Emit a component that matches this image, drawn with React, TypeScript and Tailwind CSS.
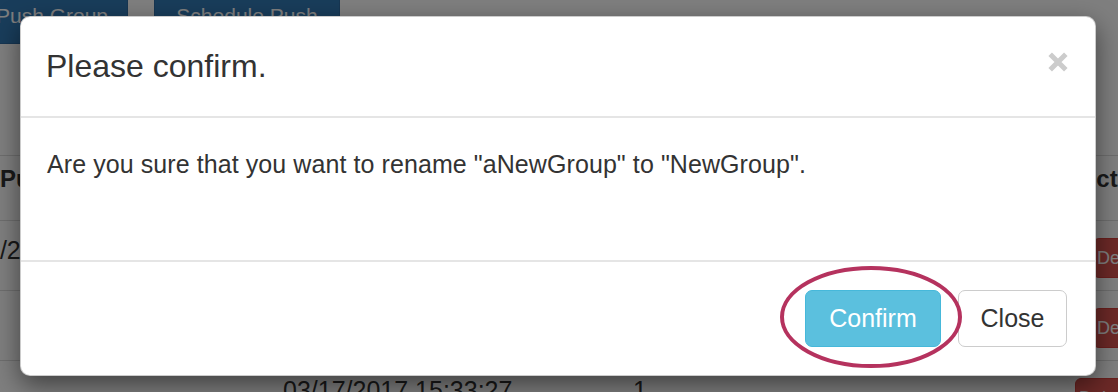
import React from 'react';

const rows = [
  { first: '3/20/2017 10:02:11', second: '03/20/2017 10:05:00', count: '2', actionPad: 'pl-[28px]' },
  { first: '', second: '03/18/2017 09:41:52', count: '1', actionPad: 'pl-[28px]' },
  { first: '', second: '03/17/2017 15:33:27', count: '1', actionPad: 'pl-[10px]' },
];

const App: React.FC = () => {
  return (
    <div className="relative w-[1118px] h-[392px] overflow-hidden bg-white font-['Liberation_Sans',Arial,sans-serif] text-[#333333]">
      {/* Page behind the dialog */}
      <div className="flex -mt-[13px] gap-[26px] -ml-[24px]">
        <button className="w-[152px] h-[57px] shrink-0 bg-[#337ab7] border border-[#2e6da4] rounded-[7px] text-white text-[21px]">Push Group</button>
        <button className="w-[186px] h-[57px] shrink-0 bg-[#337ab7] border border-[#2e6da4] rounded-[7px] text-white text-[21px]">Schedule Push</button>
      </div>

      <div className="mt-[111px] -ml-[14px] w-[1200px]">
        <div className="flex h-[65px] border-t border-[#dddddd] pt-[6px] text-[24px] leading-[34px] font-bold">
          <div className="w-[283px] shrink-0 pl-[14px] whitespace-nowrap">Pushed At</div>
          <div className="w-[350px] shrink-0 pl-[14px] whitespace-nowrap">Scheduled Time</div>
          <div className="w-[446px] shrink-0 pl-[14px]">Count</div>
          <div className="w-[121px] shrink-0 pl-[14px]">Actions</div>
        </div>
        {rows.map((r, i) => (
          <div key={i} className="flex h-[70px] border-t border-[#dddddd] text-[25px] leading-[36px]">
            <div className="w-[283px] shrink-0 pt-[11px] whitespace-nowrap">{r.first}</div>
            <div className="w-[350px] shrink-0 pl-[14px] pt-[11px] whitespace-nowrap">{r.second}</div>
            <div className="w-[446px] shrink-0 pl-[14px] pt-[11px]">{r.count}</div>
            <div className={`w-[121px] shrink-0 pt-[16px] whitespace-nowrap ${r.actionPad}`}>
              <button className="h-[40px] px-[3px] bg-[#d9534f] border border-[#d43f3a] rounded-[6px] text-white text-[18px] leading-none">Delete</button>
            </div>
          </div>
        ))}
      </div>

      {/* Backdrop */}
      <div className="absolute inset-0 bg-black/50" />

      {/* Modal */}
      <div className="absolute left-[20px] top-[16px] w-[1076px] h-[360px] bg-white border border-black/20 rounded-[10px] shadow-[0_9px_26px_rgba(0,0,0,0.5)] flex flex-col">
        <div className="h-[101px] border-b-2 border-[#e5e5e5] flex items-start justify-between pl-[25px] pr-[27px] pt-[27px]">
          <h4 className="text-[32px] leading-[44px] font-normal">Please confirm.</h4>
          <button className="mt-[8px] w-[20px] h-[20px]">
            <svg viewBox="0 0 20 20" width="20" height="20">
              <path d="M2.2 2.2 L17.8 17.8 M17.8 2.2 L2.2 17.8" stroke="#cccccc" strokeWidth="5" strokeLinecap="butt" fill="none" />
            </svg>
          </button>
        </div>
        <div className="h-[142px] px-[26px] pt-[28px]">
          <p className="text-[25px] leading-[36px] tracking-[0.08px]">Are you sure that you want to rename "aNewGroup" to "NewGroup".</p>
        </div>
        <div className="flex-1 border-t-2 border-[#e5e5e5] flex justify-end items-start gap-[17px] pt-[28px] pr-[28px]">
          <button className="w-[136px] h-[57px] bg-[#5bc0de] border border-[#46b8da] rounded-[7px] text-white text-[25px]">Confirm</button>
          <button className="w-[109px] h-[57px] bg-white border border-[#cccccc] rounded-[7px] text-[#333333] text-[25px]">Close</button>
        </div>
      </div>

      {/* Highlight ring around Confirm */}
      <svg className="absolute left-[780px] top-[266px]" width="182" height="102" viewBox="0 0 182 102">
        <ellipse cx="91" cy="51" rx="89" ry="49" fill="none" stroke="#b5325e" strokeWidth="4" />
      </svg>
    </div>
  );
};

export default App;
